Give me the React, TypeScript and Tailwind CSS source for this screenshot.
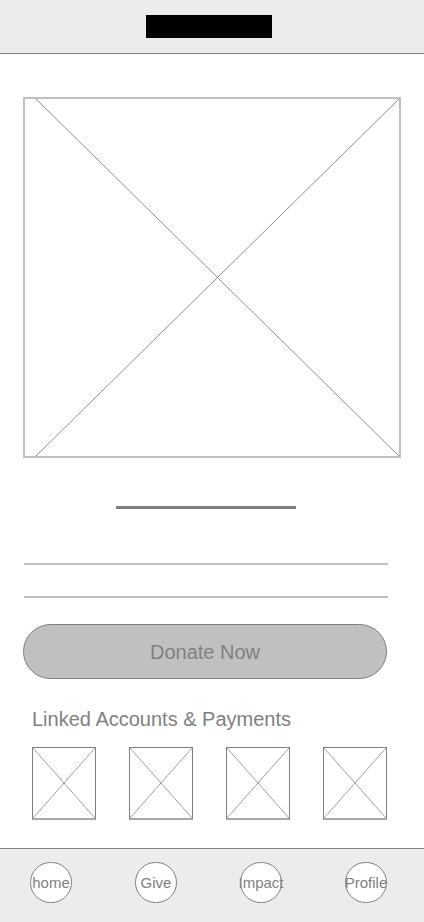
import React from "react";

const NAV = ["home", "Give", "Impact", "Profile"];

function Cross({ w, h, x0 = 0, stroke = "#8a8a8a" }: { w: number; h: number; x0?: number; stroke?: string }) {
  return (
    <svg viewBox={`0 0 ${w} ${h}`} preserveAspectRatio="none" className="block w-full h-full">
      <line x1={x0} y1={0} x2={w} y2={h} stroke={stroke} strokeWidth={1} />
      <line x1={w} y1={0} x2={x0} y2={h} stroke={stroke} strokeWidth={1} />
    </svg>
  );
}

export default function App() {
  return (
    <div className="min-h-screen w-[424px] flex flex-col bg-white font-['Liberation_Sans',Arial,sans-serif] text-[#808080]">
      <header className="h-[54px] shrink-0 bg-[#ececec] border-b border-[#808080] pl-[146px] pt-[15px]">
        <div className="w-[126px] h-[23px] bg-black" />
      </header>

      <div className="mt-[43px] ml-[23px] w-[378px] h-[361px] border-2 border-[#c0c0c0]">
        <Cross w={374} h={357} x0={11} stroke="#909090" />
      </div>

      <div className="mt-[48px] ml-[116px] w-[180px] h-[3px] bg-[#808080]" />

      <div className="mt-[54px] ml-[24px] w-[364px] h-[2px] bg-[#c0c0c0]" />
      <div className="mt-[31px] ml-[24px] w-[364px] h-[2px] bg-[#c0c0c0]" />

      <button className="mt-[26px] ml-[23px] w-[364px] h-[55px] rounded-full bg-[#c0c0c0] border border-[#808080] flex items-center justify-center text-[20px] text-[#808080]">
        Donate Now
      </button>

      <h2 className="mt-[29px] ml-[32px] text-[20px] leading-[23px]">Linked Accounts &amp; Payments</h2>

      <div className="mt-[16px] ml-[32px] flex gap-[33px]">
        {[0, 1, 2, 3].map((i) => (
          <div key={i} className="w-[64px] h-[73px] border border-[#808080] border-b-2 border-b-[#a8a8a8]">
            <Cross w={62} h={70} stroke="#a0a0a0" />
          </div>
        ))}
      </div>

      <nav className="mt-auto h-[74px] shrink-0 bg-[#ececec] border-t border-[#808080] pt-[13px] pl-[30px] flex gap-[63px]">
        {NAV.map((label) => (
          <div
            key={label}
            className="w-[42px] h-[41px] rounded-full bg-white border border-[#808080] flex items-center justify-center"
          >
            <span className="text-[15px] leading-none whitespace-nowrap text-[#808080]">{label}</span>
          </div>
        ))}
      </nav>
    </div>
  );
}
